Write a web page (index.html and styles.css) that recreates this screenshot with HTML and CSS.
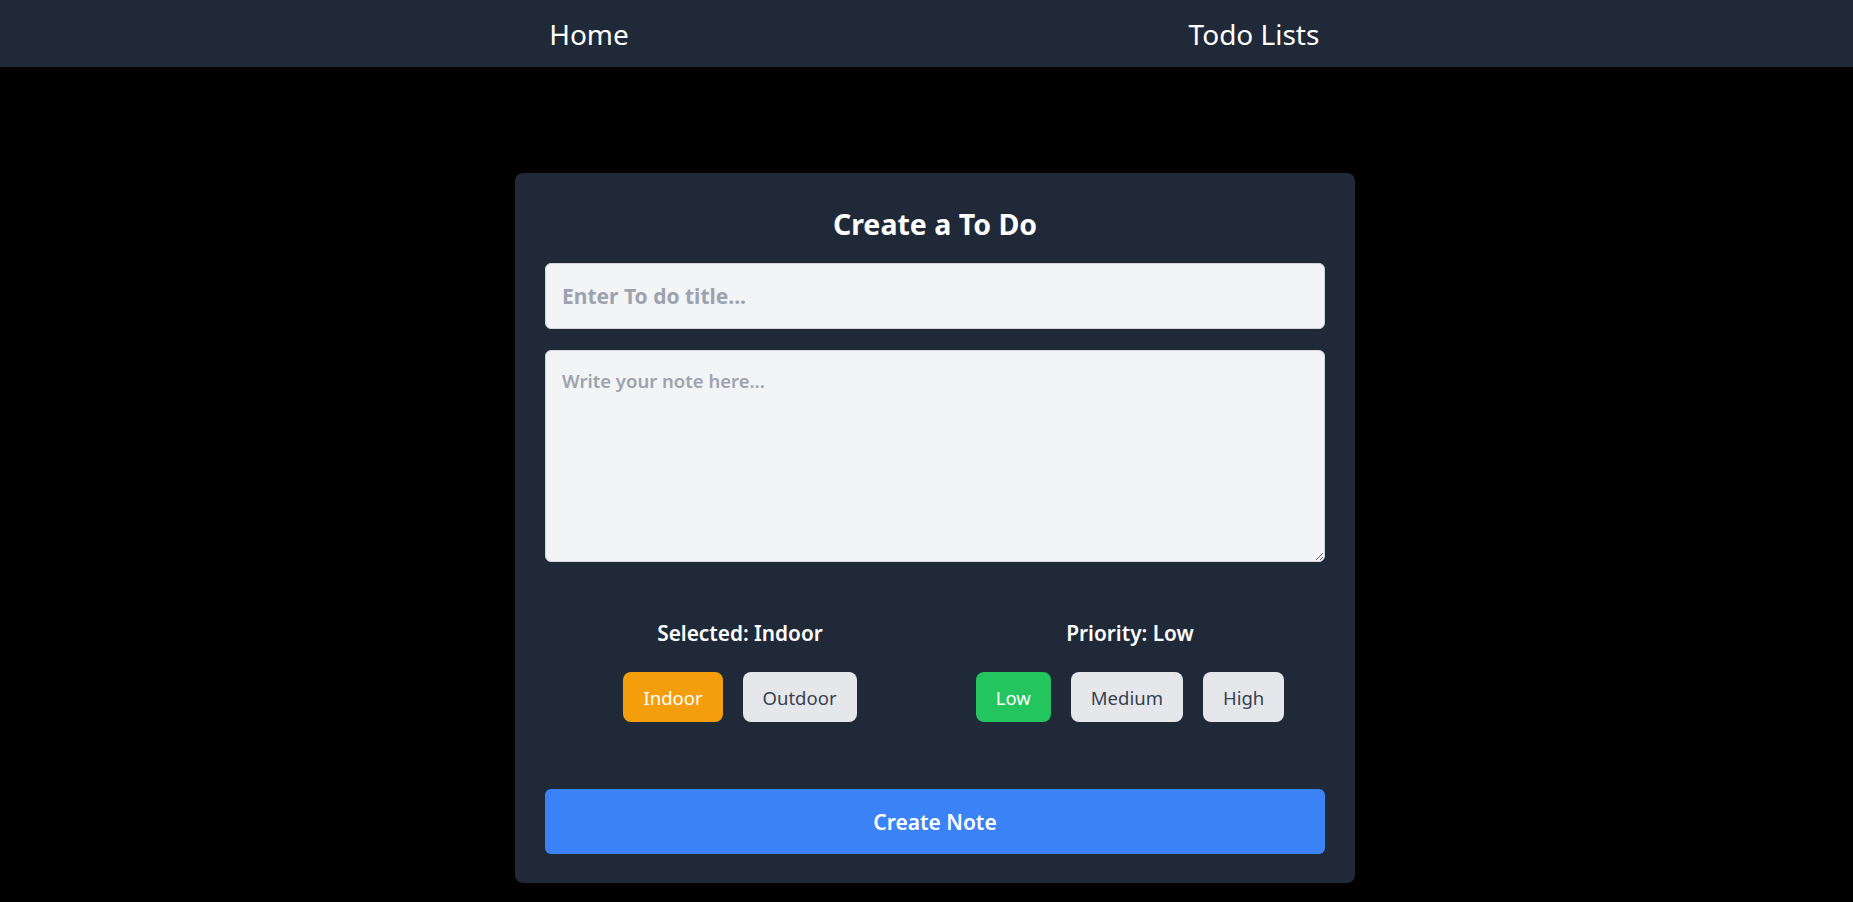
FILE: index.html
```html
<!DOCTYPE html>
<html lang="en">
<head>
<meta charset="utf-8">
<title>Create a To Do</title>
<link rel="stylesheet" href="styles.css">
</head>
<body>
<nav class="nav">
  <a class="nav-link" href="#">Home</a>
  <a class="nav-link" href="#">Todo Lists</a>
</nav>
<main class="main">
  <form class="card">
    <h2 class="card-title">Create a To Do</h2>
    <input class="title-input" type="text" placeholder="Enter To do title...">
    <textarea class="note-input" placeholder="Write your note here..."></textarea>
    <div class="options">
      <div class="group">
        <p class="group-label">Selected: Indoor</p>
        <div class="btn-row">
          <button type="button" class="opt opt-amber">Indoor</button>
          <button type="button" class="opt">Outdoor</button>
        </div>
      </div>
      <div class="group">
        <p class="group-label">Priority: Low</p>
        <div class="btn-row">
          <button type="button" class="opt opt-green">Low</button>
          <button type="button" class="opt">Medium</button>
          <button type="button" class="opt">High</button>
        </div>
      </div>
    </div>
    <button type="button" class="submit">Create Note</button>
  </form>
</main>
</body>
</html>
```

FILE: styles.css
```css
* { box-sizing: border-box; }

html, body {
  margin: 0;
  padding: 0;
  background: #000;
  font-family: "Noto Sans", "Open Sans", Arial, sans-serif;
}

.nav {
  height: 67px;
  background: #1f2937;
  display: flex;
  justify-content: center;
  align-items: center;
  gap: 465px;
  padding-right: 10px;
}

.nav-link {
  width: 200px;
  text-align: center;
  color: #fff;
  text-decoration: none;
  font-size: 28px;
  font-weight: 400;
  line-height: 36px;
}

.main {
  display: flex;
  justify-content: center;
  padding: 106px 0 0 17px;
}

.card {
  width: 840px;
  background: #1f2937;
  border-radius: 8px;
  padding: 30px 30px 29px;
  display: flex;
  flex-direction: column;
}

.card-title {
  margin: 3px 0 21px;
  text-align: center;
  color: #fff;
  font-size: 28.5px;
  font-weight: 700;
  line-height: 36px;
}

.title-input,
.note-input {
  width: 100%;
  background: #f3f4f6;
  border: 1px solid #d1d5db;
  border-radius: 6px;
  font-family: inherit;
  color: #111827;
  outline: none;
}

.title-input {
  height: 66px;
  padding: 0 16px;
  font-size: 21px;
  font-weight: 700;
  margin: 0 0 21px;
}

.note-input {
  height: 212px;
  padding: 16px 16px 12px;
  font-size: 18.5px;
  font-weight: 600;
  line-height: 28px;
  margin: 0;
  display: block;
}

.title-input::placeholder,
.note-input::placeholder {
  color: #9ca3af;
}

.options {
  display: grid;
  grid-template-columns: 1fr 1fr;
  margin-top: 57px;
}

.group {
  display: flex;
  flex-direction: column;
  align-items: center;
}

.group-label {
  margin: 0 0 25px;
  color: #fff;
  font-size: 20.8px;
  font-weight: 600;
  line-height: 28px;
}

.btn-row {
  display: flex;
  gap: 20px;
}

.opt {
  height: 50px;
  padding: 0 20px;
  border: none;
  border-radius: 8px;
  background: #e5e7eb;
  color: #374151;
  font-family: inherit;
  font-size: 18.5px;
  font-weight: 400;
}

.opt-amber {
  background: #f59e0b;
  color: #fff;
}

.opt-green {
  background: #22c55e;
  color: #fff;
}

.submit {
  margin-top: 67px;
  height: 65px;
  width: 100%;
  border: none;
  border-radius: 6px;
  background: #3b82f6;
  color: #fff;
  font-family: inherit;
  font-size: 21px;
  font-weight: 600;
}
```
